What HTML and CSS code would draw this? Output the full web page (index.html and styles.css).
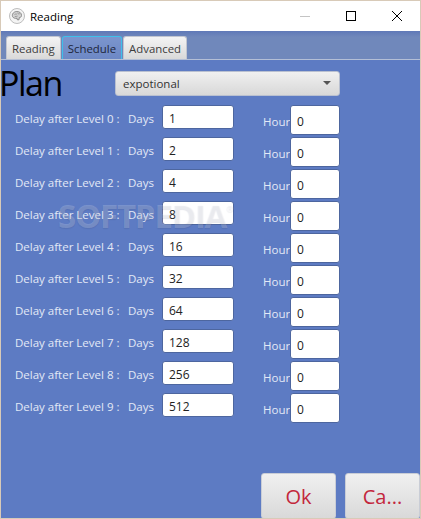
FILE: index.html
```html
<!DOCTYPE html>
<html lang="en">
<head>
    <meta charset="UTF-8">
    <meta name="viewport" content="width=device-width, initial-scale=1.0">
    <title>Reading</title>
    <link rel="stylesheet" href="styles.css">
</head>
<body>
    <div class="window">
        <div class="titlebar">
            <svg class="app-icon" viewBox="0 0 16 16" width="16" height="16" fill="none">
                <circle cx="8" cy="8" r="7.5" fill="#f4f4f4" stroke="#bdbdbd"/>
                <path d="M3.500 8.500c-.8-2.600 1.400-5 4.300-5 2.700 0 4.900 1.600 4.700 4 0 1.300-1 2.100-2.200 2.100l-.3 2.200H8.300l-.3-1.500c-2 .3-3.800-.2-4.500-1.800z" fill="#d2d2d2" stroke="#777" stroke-width=".8"/>
                <path d="M5.500 6.500c1-.8 1.700 0 2.500-.6M8.500 4.800c.3 1.200 1.500 1.200 2.300.9M5.800 8.600c1-.4 2 .1 2.800-.5" stroke="#777" stroke-width=".6"/>
            </svg>
            <span class="app-title">Reading</span>
            <div class="win-controls">
                <svg class="win-btn" viewBox="0 0 46 30" width="46" height="30"><path d="M18 15.500h10" stroke="#c4c4c4"/></svg>
                <svg class="win-btn" viewBox="0 0 46 30" width="46" height="30"><rect x="18.500" y="10.500" width="9" height="9" fill="none" stroke="#000"/></svg>
                <svg class="win-btn" viewBox="0 0 46 30" width="46" height="30"><path d="M18 10l10 10M28 10L18 20" stroke="#000"/></svg>
            </div>
        </div>
        <div class="tabs">
            <div class="tab">Reading</div>
            <div class="tab active">Schedule</div>
            <div class="tab">Advanced</div>
        </div>
        <div class="content">
            <div class="plan">
                <h1>Plan</h1>
                <div class="combo">
                    <span>expotional</span>
                    <span class="arrow"></span>
                </div>
            </div>
            <div class="rows">
                <div class="row">
                    <span class="level">Delay after Level 0 :</span><span class="days">Days</span>
                    <div class="field">1</div><span class="hour">Hour</span><div class="field small">0</div>
                </div>
                <div class="row">
                    <span class="level">Delay after Level 1 :</span><span class="days">Days</span>
                    <div class="field">2</div><span class="hour">Hour</span><div class="field small">0</div>
                </div>
                <div class="row">
                    <span class="level">Delay after Level 2 :</span><span class="days">Days</span>
                    <div class="field">4</div><span class="hour">Hour</span><div class="field small">0</div>
                </div>
                <div class="row">
                    <span class="level">Delay after Level 3 :</span><span class="days">Days</span>
                    <div class="field">8</div><span class="hour">Hour</span><div class="field small">0</div>
                </div>
                <div class="row">
                    <span class="level">Delay after Level 4 :</span><span class="days">Days</span>
                    <div class="field">16</div><span class="hour">Hour</span><div class="field small">0</div>
                </div>
                <div class="row">
                    <span class="level">Delay after Level 5 :</span><span class="days">Days</span>
                    <div class="field">32</div><span class="hour">Hour</span><div class="field small">0</div>
                </div>
                <div class="row">
                    <span class="level">Delay after Level 6 :</span><span class="days">Days</span>
                    <div class="field">64</div><span class="hour">Hour</span><div class="field small">0</div>
                </div>
                <div class="row">
                    <span class="level">Delay after Level 7 :</span><span class="days">Days</span>
                    <div class="field">128</div><span class="hour">Hour</span><div class="field small">0</div>
                </div>
                <div class="row">
                    <span class="level">Delay after Level 8 :</span><span class="days">Days</span>
                    <div class="field">256</div><span class="hour">Hour</span><div class="field small">0</div>
                </div>
                <div class="row">
                    <span class="level">Delay after Level 9 :</span><span class="days">Days</span>
                    <div class="field">512</div><span class="hour">Hour</span><div class="field small">0</div>
                </div>
            </div>
            <div class="actions">
                <button>Ok</button>
                <button>Ca...</button>
            </div>
            <div class="watermark">SOFTPEDIA<sup>®</sup></div>
        </div>
    </div>
</body>
</html>
```

FILE: styles.css
```css
* {
    margin: 0;
    padding: 0;
    box-sizing: border-box;
    font-family: "Open Sans", sans-serif;
}
html, body {
    height: 100%;
    overflow: hidden;
}
.window {
    height: 519px;
    display: flex;
    flex-direction: column;
    background: #5d7bc3;
    border: 1px solid #d8cab8;
    position: relative;
    overflow: hidden;
}
.titlebar {
    height: 30px;
    background: #fff;
    display: flex;
    align-items: center;
    padding-left: 8px;
    flex: none;
}
.app-title {
    margin-left: 5px;
    font-size: 11.5px;
    color: #000;
}
.win-controls {
    margin-left: auto;
    display: flex;
}
.win-btn {
    display: block;
}
.tabs {
    height: 29px;
    flex: none;
    display: flex;
    align-items: flex-end;
    gap: 1px;
    padding-left: 5px;
    background: linear-gradient(#5f79b8, #7088bb 6px);
    border-bottom: 1px solid #b4bfd6;
}
.tab {
    height: 23px;
    padding: 0 5px;
    display: flex;
    align-items: center;
    font-size: 11.4px;
    color: #3c3c3c;
    background: linear-gradient(#f4f4f4, #d9d9d9);
    border: 1px solid #c2c6d0;
    border-bottom: 0;
    border-radius: 3px 3px 0 0;
}
.tab.active {
    background: linear-gradient(#7b95cd, #6d88c5);
    border: 1px solid #3fc0ea;
    border-bottom: 0;
    color: #20263a;
}
.content {
    flex: 1;
    position: relative;
    display: flex;
    flex-direction: column;
    min-height: 0;
}
.plan {
    display: flex;
    align-items: center;
    height: 45px;
}
.plan h1 {
    width: 114px;
    font-size: 34px;
    font-weight: 400;
    letter-spacing: -1.500px;
    color: #000;
    margin-left: -2px;
    flex: none;
}
.combo {
    width: 225px;
    height: 25px;
    margin-left: 2px;
    margin-top: 1px;
    display: flex;
    align-items: center;
    justify-content: space-between;
    padding: 0 8px 0 7px;
    font-size: 11.5px;
    color: #333;
    background: linear-gradient(#f0f0f0, #d8d8d8);
    border: 1px solid #b9c0d0;
    border-radius: 3px;
}
.arrow {
    width: 0;
    height: 0;
    border: 4px solid transparent;
    border-top: 4px solid #555;
    border-bottom: 0;
}
.rows {
    display: flex;
    flex-direction: column;
    gap: 2px;
}
.row {
    height: 30px;
    display: flex;
    align-items: flex-start;
    padding-left: 14px;
    font-size: 11.5px;
    color: #e3e9f6;
}
.level {
    width: 113px;
    line-height: 27px;
    white-space: nowrap;
}
.days {
    width: 34px;
    line-height: 27px;
}
.hour {
    width: 27px;
    margin-left: 29px;
    line-height: 34px;
}
.field {
    width: 72px;
    height: 24px;
    line-height: 25px;
    padding-left: 6px;
    font-size: 12px;
    color: #222;
    background: #fff;
    border: 1px solid #4d669f;
    border-radius: 3px;
}
.field.small {
    width: 50px;
    height: 30px;
    line-height: 31px;
}
.actions {
    margin-top: auto;
    display: flex;
    justify-content: flex-end;
    gap: 9px;
    margin-bottom: -1px;
}
.actions button {
    width: 75px;
    height: 46px;
    font-size: 20px;
    color: #c3273c;
    background: linear-gradient(#f0f0f0, #d9d9d9);
    border: 1px solid #c9cdd6;
    border-radius: 3px;
}
.watermark {
    position: absolute;
    left: 57px;
    top: 133px;
    font-size: 33px;
    font-weight: 700;
    letter-spacing: -1.200px;
    color: rgba(255, 255, 255, .2);
    text-shadow: 0 1px 1px rgba(40, 50, 90, .12);
    pointer-events: none;
    white-space: nowrap;
}
.watermark sup {
    font-size: 9px;
    font-weight: 400;
    vertical-align: 16px;
    line-height: 0;
}
```
